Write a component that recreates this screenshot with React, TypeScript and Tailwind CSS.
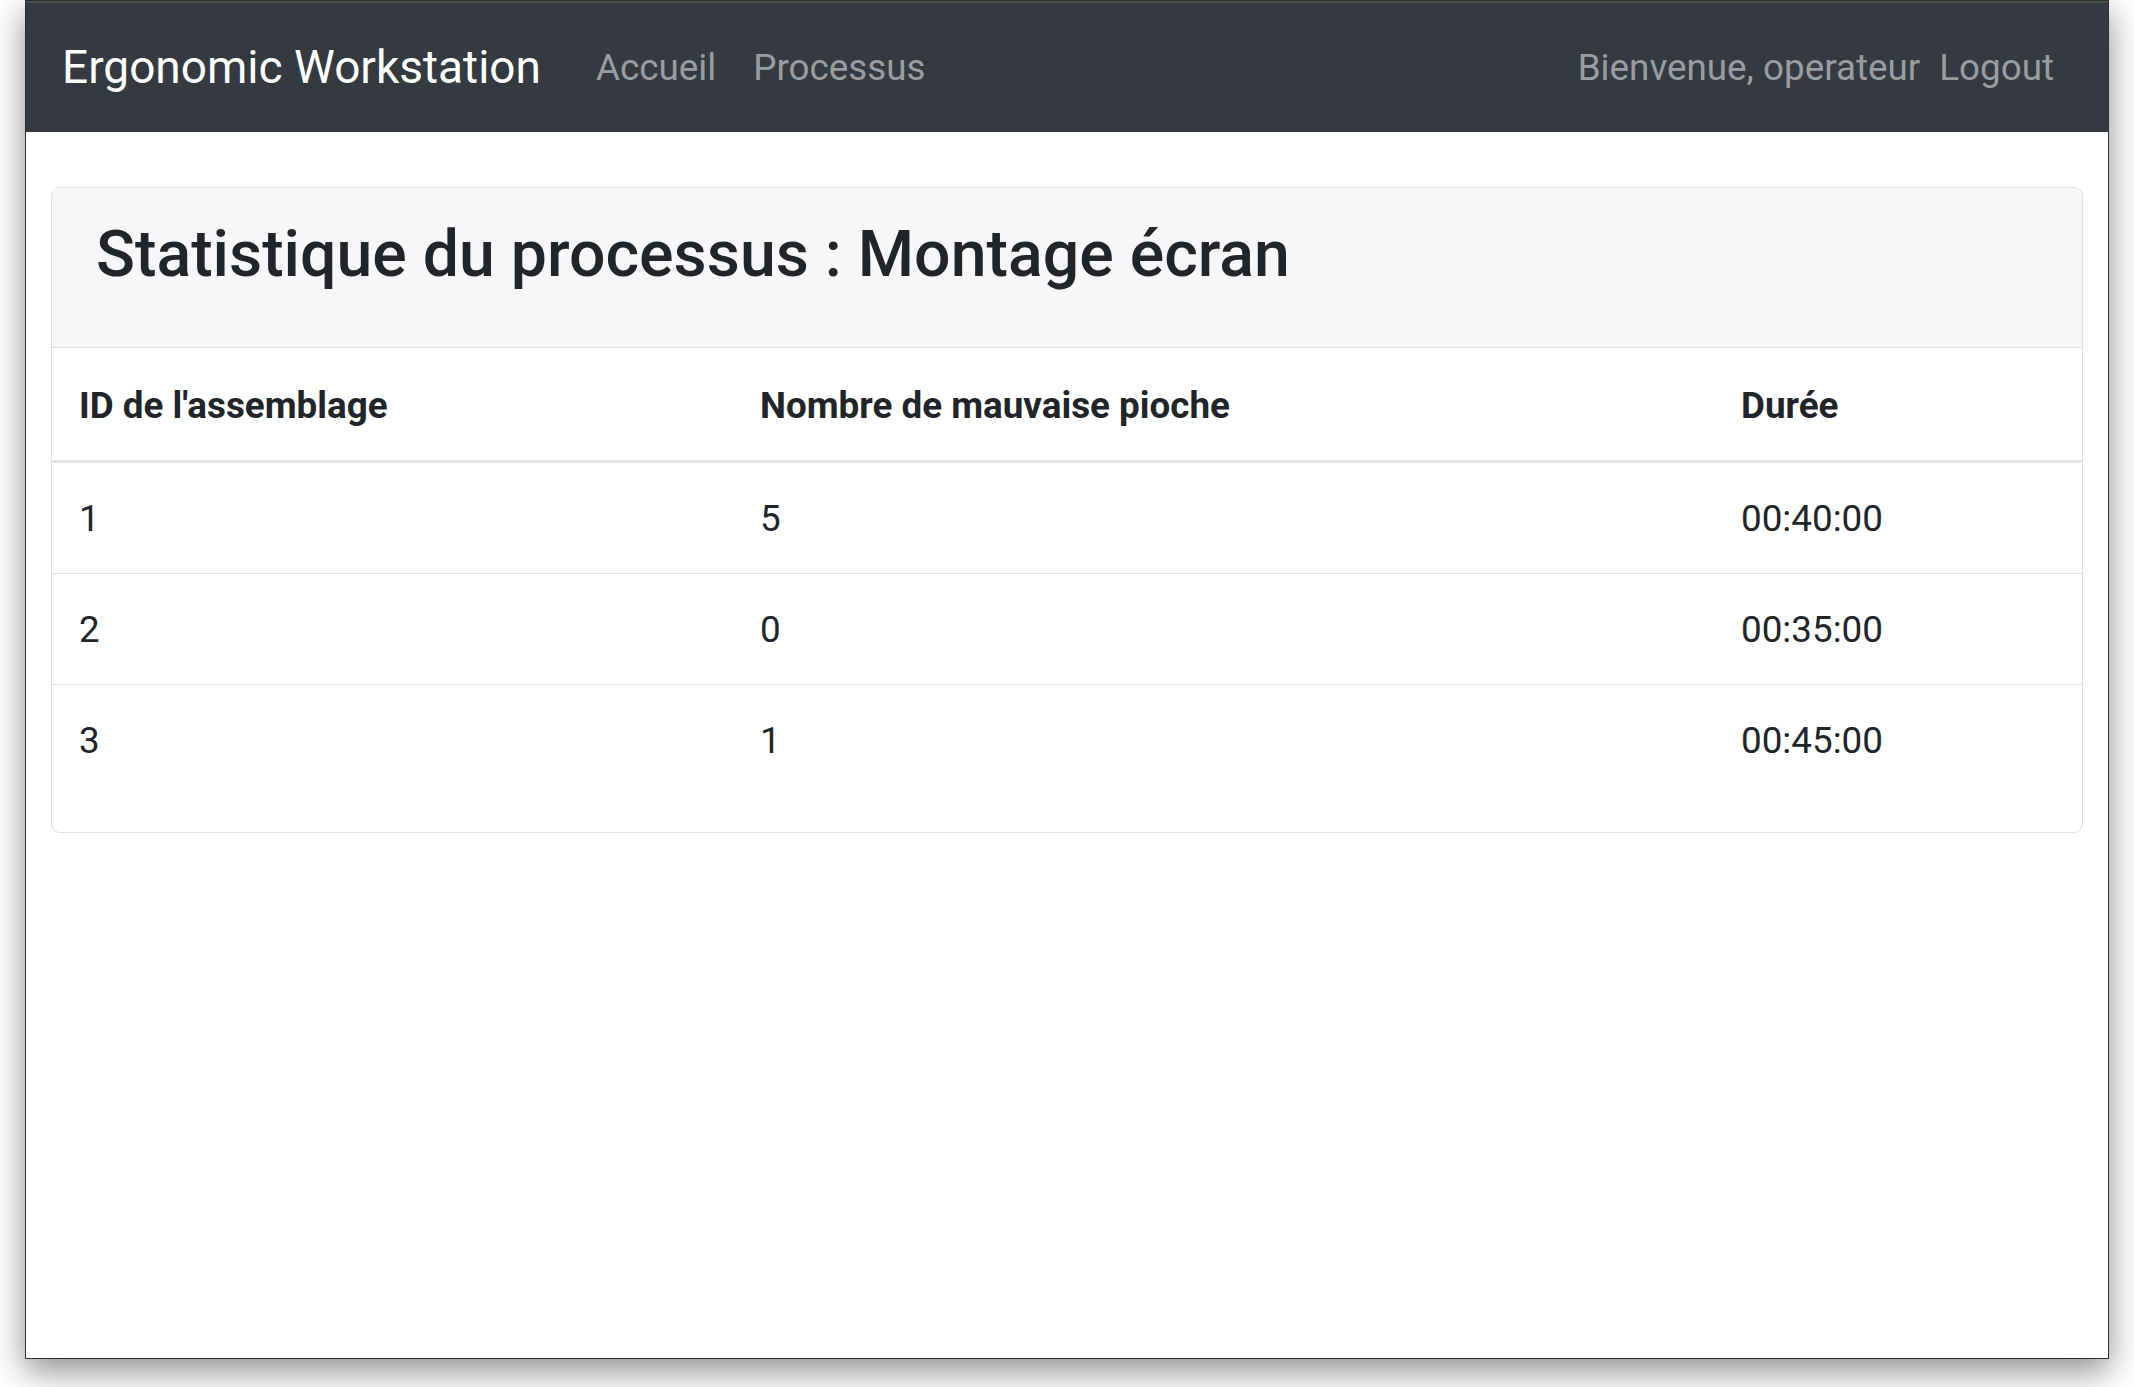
import React from "react";

export default function App() {
  const rows = [
    ["1", "5", "00:40:00"],
    ["2", "0", "00:35:00"],
    ["3", "1", "00:45:00"],
  ];
  return (
    <div className="w-[2134px] h-[1387px] bg-white overflow-hidden font-['Roboto','Liberation_Sans',sans-serif]">
      <div className="ml-[25px] w-[2084px] h-[1359px] border border-[#2f2f2f] bg-white shadow-[0_12px_32px_rgba(0,0,0,0.45)] flex flex-col">
        <div className="h-[2px] bg-[#4d4d4d]" />
        <nav className="h-[129px] bg-[#343a40] flex items-center pl-[36px] pr-[54px]">
          <span className="text-[46px] leading-[1.5] text-white">Ergonomic Workstation</span>
          <div className="flex ml-[55px] gap-[37px] text-[36.8px] leading-[1.5] text-[#9a9da0]">
            <span>Accueil</span>
            <span>Processus</span>
          </div>
          <div className="ml-auto flex gap-[19px] text-[36.8px] leading-[1.5] text-[#9a9da0]">
            <span>Bienvenue, operateur</span>
            <span>Logout</span>
          </div>
        </nav>
        <div className="px-[25px] pt-[55px]">
          <div className="border border-[#dfdfdf] rounded-[9px] overflow-hidden bg-white">
            <div className="bg-[#f7f7f7] border-b border-[#dfdfdf] pt-[26px] pb-[53px] pl-[44px]">
              <h2 className="text-[64.4px] leading-[80px] font-medium text-[#212529]">
                Statistique du processus : Montage écran
              </h2>
            </div>
            <table className="w-full border-collapse mb-[37px] text-[#212529] text-[36.8px] leading-[55px]">
              <colgroup>
                <col className="w-[681px]" />
                <col className="w-[981px]" />
                <col />
              </colgroup>
              <thead>
                <tr className="border-b-[3px] border-[#dee2e6]">
                  <th className="text-left font-bold pt-[30px] pb-[27px] px-[27px]">ID de l'assemblage</th>
                  <th className="text-left font-bold pt-[30px] pb-[27px] px-[27px]">Nombre de mauvaise pioche</th>
                  <th className="text-left font-bold pt-[30px] pb-[27px] px-[27px]">Durée</th>
                </tr>
              </thead>
              <tbody>
                {rows.map((r, i) => (
                  <tr key={i} className={i > 0 ? "border-t border-[#dee2e6]" : ""}>
                    {r.map((c, j) => (
                      <td key={j} className="py-[27.5px] px-[27px] font-normal">
                        {c}
                      </td>
                    ))}
                  </tr>
                ))}
              </tbody>
            </table>
          </div>
        </div>
      </div>
    </div>
  );
}
